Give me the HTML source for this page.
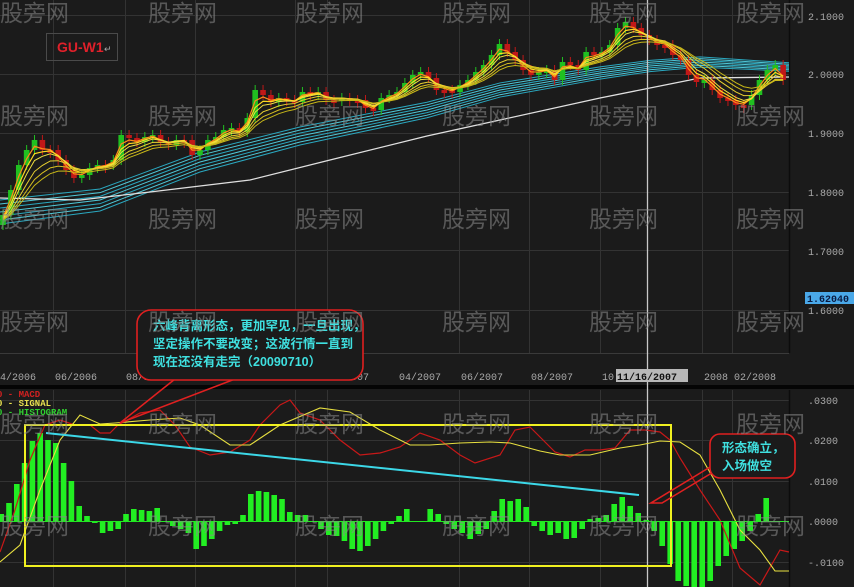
<!DOCTYPE html>
<html><head><meta charset="utf-8">
<style>
html,body{margin:0;padding:0;background:#1b1b1b;}
#wrap{position:relative;width:854px;height:587px;overflow:hidden;background:#1b1b1b;}
svg{position:absolute;left:0;top:0;}
.ax{font-family:"Liberation Mono",monospace;font-size:10px;fill:#a9a9a9;}
.wm{font-family:"Liberation Sans","Noto Sans CJK SC",sans-serif;font-size:23px;fill:#8a8a8a;fill-opacity:0.55;}
.cn{font-family:"Liberation Sans","Noto Sans CJK SC",sans-serif;font-size:12.5px;font-weight:bold;fill:#3fe0e0;}
.lg{font-family:"Liberation Mono",monospace;font-size:9px;font-weight:bold;}
</style></head><body><div id="wrap">
<svg id="s" width="854" height="587" viewBox="0 0 854 587">
<g stroke="#333" stroke-width="1">
<line x1="0" y1="15.5" x2="789" y2="15.5"/><line x1="0" y1="74.5" x2="789" y2="74.5"/><line x1="0" y1="133.5" x2="789" y2="133.5"/><line x1="0" y1="192.5" x2="789" y2="192.5"/><line x1="0" y1="250.5" x2="789" y2="250.5"/><line x1="0" y1="310.5" x2="789" y2="310.5"/>
<line x1="53.5" y1="0" x2="53.5" y2="353"/><line x1="125.5" y1="0" x2="125.5" y2="353"/><line x1="195.5" y1="0" x2="195.5" y2="353"/><line x1="295.5" y1="0" x2="295.5" y2="353"/><line x1="327.5" y1="0" x2="327.5" y2="353"/><line x1="459.5" y1="0" x2="459.5" y2="353"/><line x1="529.5" y1="0" x2="529.5" y2="353"/><line x1="600.5" y1="0" x2="600.5" y2="353"/><line x1="702.5" y1="0" x2="702.5" y2="353"/><line x1="732.5" y1="0" x2="732.5" y2="353"/>
<line x1="0" y1="400.5" x2="789" y2="400.5"/><line x1="0" y1="440.5" x2="789" y2="440.5"/><line x1="0" y1="481.5" x2="789" y2="481.5"/><line x1="0" y1="562.5" x2="789" y2="562.5"/>
<line x1="53.5" y1="390" x2="53.5" y2="587"/><line x1="125.5" y1="390" x2="125.5" y2="587"/><line x1="195.5" y1="390" x2="195.5" y2="587"/><line x1="295.5" y1="390" x2="295.5" y2="587"/><line x1="327.5" y1="390" x2="327.5" y2="587"/><line x1="459.5" y1="390" x2="459.5" y2="587"/><line x1="529.5" y1="390" x2="529.5" y2="587"/><line x1="600.5" y1="390" x2="600.5" y2="587"/><line x1="702.5" y1="390" x2="702.5" y2="587"/><line x1="732.5" y1="390" x2="732.5" y2="587"/>
</g>
<line x1="0" y1="353.5" x2="789" y2="353.5" stroke="#3a3a3a"/>
<line x1="789.5" y1="0" x2="789.5" y2="353" stroke="#0c0c0c" stroke-width="1.5"/>
<line x1="789.5" y1="390" x2="789.5" y2="587" stroke="#0c0c0c" stroke-width="1.5"/>
<rect x="0" y="385" width="854" height="4" fill="#050505"/>
<g id="top"></g>
<rect x="46.5" y="33.5" width="71" height="27" fill="none" stroke="#4a4a4a"/>
<text x="57" y="52" font-family="Liberation Sans,sans-serif" font-size="14" font-weight="bold" fill="#e0202a">GU-W1</text>
<text x="104" y="52" font-family="Liberation Sans,sans-serif" font-size="9" fill="#aaa">↵</text>
<line x1="647.5" y1="0" x2="647.5" y2="587" stroke="#c8c8c8" stroke-width="1.3"/>
<g class="ax">
<text x="808" y="20">2.1000</text><text x="808" y="78">2.0000</text><text x="808" y="137">1.9000</text><text x="808" y="196">1.8000</text><text x="808" y="255">1.7000</text><text x="808" y="314">1.6000</text>
<text x="0" y="380">4/2006</text><text x="55" y="380">06/2006</text><text x="126" y="380">08/2006</text><text x="195" y="380">10/2006</text><text x="297" y="380">2007 02/2007</text><text x="399" y="380">04/2007</text><text x="461" y="380">06/2007</text><text x="531" y="380">08/2007</text><text x="602" y="380">10</text><text x="704" y="380">2008 02/2008</text>
<text x="808" y="404">.0300</text><text x="808" y="444">.0200</text><text x="808" y="485">.0100</text><text x="808" y="525">.0000</text><text x="808" y="566">-.0100</text>
</g>
<rect x="616" y="369" width="72" height="13" fill="#b8b8b8"/>
<text x="617" y="380" class="ax" style="fill:#111;font-weight:bold">11/16/2007</text>
<rect x="805" y="292" width="49" height="12" fill="#4aa8e8"/>
<text x="807" y="302" class="ax" style="fill:#0a1a40;font-weight:bold">1.62040</text>
<g id="bot"></g>
<line x1="0" y1="521.5" x2="789" y2="521.5" stroke="#22e822" stroke-width="1"/>
<rect x="25" y="425" width="646" height="141" fill="none" stroke="#f0f020" stroke-width="2"/>
<line x1="46" y1="433" x2="639" y2="495" stroke="#3cd8e8" stroke-width="2"/>
<g class="lg">
<text x="-3" y="397" fill="#d02020">0 - MACD</text>
<text x="-3" y="406" fill="#e8e050">0 - SIGNAL</text>
<text x="-3" y="415" fill="#30d030">0 - HISTOGRAM</text>
</g>
<path d="M175 379 L120 423 L235 379" fill="none" stroke="#e02020" stroke-width="1.6"/>
<rect x="137" y="310" width="226" height="70" rx="14" fill="#1b1b1b" stroke="#e02020" stroke-width="1.6"/>
<text class="cn" x="153" y="330">六峰背离形态，更加罕见，一旦出现，</text>
<text class="cn" x="153" y="348">坚定操作不要改变；这波行情一直到</text>
<text class="cn" x="153" y="366">现在还没有走完（20090710）</text>
<path d="M720 461 L651 503 L662 503 L720 468" fill="none" stroke="#e02020" stroke-width="1.6"/>
<rect x="710" y="434" width="85" height="44" rx="10" fill="#1b1b1b" stroke="#e02020" stroke-width="1.6"/>
<text class="cn" x="722" y="452">形态确立，</text>
<text class="cn" x="722" y="470">入场做空</text>
<g class="wm">
<text x="0" y="21">股旁网</text><text x="148" y="21">股旁网</text><text x="295" y="21">股旁网</text><text x="442" y="21">股旁网</text><text x="589" y="21">股旁网</text><text x="736" y="21">股旁网</text>
<text x="0" y="124">股旁网</text><text x="148" y="124">股旁网</text><text x="295" y="124">股旁网</text><text x="442" y="124">股旁网</text><text x="589" y="124">股旁网</text><text x="736" y="124">股旁网</text>
<text x="0" y="227">股旁网</text><text x="148" y="227">股旁网</text><text x="295" y="227">股旁网</text><text x="442" y="227">股旁网</text><text x="589" y="227">股旁网</text><text x="736" y="227">股旁网</text>
<text x="0" y="330">股旁网</text><text x="148" y="330">股旁网</text><text x="295" y="330">股旁网</text><text x="442" y="330">股旁网</text><text x="589" y="330">股旁网</text><text x="736" y="330">股旁网</text>
<text x="0" y="432">股旁网</text><text x="148" y="432">股旁网</text><text x="295" y="432">股旁网</text><text x="442" y="432">股旁网</text><text x="589" y="432">股旁网</text><text x="736" y="432">股旁网</text>
<text x="0" y="534">股旁网</text><text x="148" y="534">股旁网</text><text x="295" y="534">股旁网</text><text x="442" y="534">股旁网</text><text x="589" y="534">股旁网</text><text x="736" y="534">股旁网</text>
</g>
</svg>
<script>
(function(){
var NS="http://www.w3.org/2000/svg";
function el(p,t,a){var e=document.createElementNS(NS,t);for(var k in a)e.setAttribute(k,a[k]);p.appendChild(e);return e;}
var top=document.getElementById("top"),bot=document.getElementById("bot");
function pl(g,pts,c,w){el(g,"polyline",{points:pts.map(function(p){return p[0]+","+p[1]}).join(" "),fill:"none",stroke:c,"stroke-width":w||1});}
var cy=[[0,212],[100,200],[200,162],[300,136],[427,110],[500,90],[600,73],[650,66],[700,62],[789,67]];
for(var i=0;i<7;i++){var sp=i-3;pl(top,cy.map(function(p){var f=1-p[0]/789*0.65;return [p[0],p[1]+sp*4*f];}),i%2?"#4fc8d8":"#2aa8c0",1);}
pl(top,[[0,198],[80,200],[150,192],[250,180],[330,160],[427,136],[500,120],[600,98],[660,86],[700,78],[789,77]],"#e0e0e0",1.3);
var C=[215,190,165,150,140,150,150,160,170,178,175,168,165,165,160,135,138,142,137,135,142,145,140,140,155,150,140,137,130,128,132,118,90,95,102,98,100,102,92,93,92,100,100,98,100,100,108,110,98,95,92,83,75,72,78,90,90,92,85,80,72,65,55,44,52,60,70,75,72,70,80,62,65,70,52,55,52,45,28,22,28,35,40,45,45,55,60,75,82,80,90,98,100,105,105,95,80,70,65,80];
var dx=7.88;
for(var i=0;i<C.length;i++){var x=i*dx+3,o=i?C[i-1]:C[0]+10,c=C[i],up=c<o;var col=up?"#20c020":"#c01818";
var t=Math.min(o,c),b=Math.max(o,c);if(b-t<3)b=t+3;
el(top,"line",{x1:x,y1:t-5,x2:x,y2:b+5,stroke:col,"stroke-width":1});
el(top,"rect",{x:x-2.8,y:t,width:5.6,height:b-t,fill:col});}
var per=[2,3,4,6,8,10],cols=["#ff8a1a","#ffd820","#f0e040","#e8d030","#d8c020","#c8b818"];
per.forEach(function(n,k){var a=2/(n+1),v=C[0]+6,pts=[];for(var i=0;i<C.length;i++){v=v+a*(C[i]-v);pts.push([i*dx+3,v]);}pl(top,pts,cols[k],k<2?1.2:1);});
var H=[7,18,37,58,80,88,81,78,58,40,15,5,-2,-12,-10,-8,7,12,11,10,13,0,-5,-8,-12,-28,-25,-18,-10,-4,-3,6,27,30,29,26,22,9,6,6,0,-8,-14,-15,-20,-28,-30,-25,-18,-10,-3,5,12,12,7,-3,-8,-12,-18,-13,-8,10,22,20,22,14,-5,-10,-14,-12,-18,-17,-8,2,3,6,17,24,15,8,1,-10,-25,-43,-60,-65,-66,-66,-60,-45,-35,-28,-20,-10,7,23];
for(var i=0;i<H.length;i++){var x=i<53?i*7.8+1:430+(i-53)*8,h=H[i];el(bot,"rect",{x:x-2.6,y:h>0?521-h:521,width:5.6,height:Math.abs(h),fill:"#22ee22"});}
pl(bot,[[0,552],[15,510],[30,460],[45,425],[60,420],[75,425],[90,425],[100,433],[110,433],[118,425],[140,413],[160,410],[175,425],[190,447],[210,455],[230,452],[250,440],[260,425],[280,405],[290,400],[300,413],[320,420],[340,440],[360,455],[380,453],[400,447],[420,433],[440,440],[460,455],[475,463],[500,455],[515,430],[530,427],[540,437],[555,452],[570,457],[585,450],[600,450],[615,448],[630,430],[645,430],[660,432],[670,440],[680,458],[700,490],[720,520],[740,568],[760,585],[780,550],[789,552]],"#c81818",1.2);
pl(bot,[[0,562],[20,545],[40,490],[60,440],[80,415],[100,424],[115,423],[150,420],[180,418],[200,425],[230,445],[250,445],[280,425],[320,408],[350,412],[380,430],[410,445],[430,445],[460,443],[490,442],[510,443],[540,451],[560,455],[590,455],[620,448],[640,445],[660,441],[680,442],[700,455],[720,490],[740,530],[760,550],[775,571],[789,571]],"#e8e040",1.1);
})();
</script>
</div></body></html>
